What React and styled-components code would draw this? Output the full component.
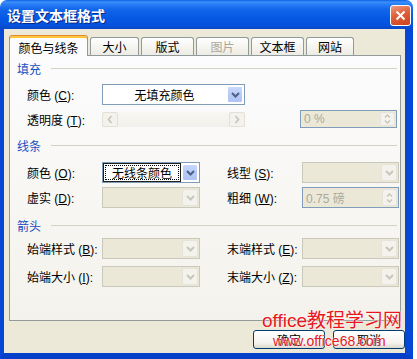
import React from 'react';
import styled, { createGlobalStyle } from 'styled-components';

const GlobalStyle = createGlobalStyle`
  html, body {
    margin: 0;
    padding: 0;
    background: #fff;
  }
  body {
    font-family: "Liberation Sans", "Noto Sans CJK SC", sans-serif;
    font-size: 12px;
    color: #000;
  }
`;

const Page = styled.div`
  position: relative;
  width: 417px;
  height: 359px;
  overflow: hidden;
  background: #fff;
`;

const Window = styled.div`
  width: 413px;
  height: 359px;
  display: flex;
  flex-direction: column;
`;

const TitleBar = styled.div`
  flex: none;
  height: 29px;
  display: flex;
  align-items: center;
  justify-content: space-between;
  padding: 0 2px 0 7px;
  border-radius: 7px 7px 0 0;
  background: linear-gradient(
    180deg,
    #0b5fe6 0%,
    #3d8ff9 7%,
    #2b7ff6 14%,
    #1266ea 32%,
    #0659e4 60%,
    #0553dd 85%,
    #0848c8 100%
  );
`;

const Title = styled.span`
  color: #fff;
  font-size: 14px;
  font-weight: bold;
  text-shadow: 1px 1px 0 #0a2a8a;
`;

const CloseButton = styled.div`
  width: 21px;
  height: 21px;
  box-sizing: border-box;
  border: 1px solid #fff;
  border-radius: 3px;
  background: linear-gradient(160deg, #ef9a7d 0%, #e0603a 45%, #c9421c 100%);
  display: flex;
  align-items: center;
  justify-content: center;
  margin-top: 1px;
`;

const Body = styled.div`
  flex: 1;
  display: flex;
  flex-direction: column;
  background: #ece9d8;
  border-left: 4px solid #0747d6;
  border-right: 8px solid #0747d6;
  border-bottom: 6px solid #0640c8;
  padding: 6px 0 0 5px;
`;

const Tabs = styled.div`
  display: flex;
  align-items: flex-end;
  gap: 2px;
  height: 20px;
`;

const Tab = styled.div`
  position: relative;
  box-sizing: border-box;
  width: ${p => p.$w}px;
  height: ${p => (p.$active ? 21 : 18)}px;
  margin-bottom: ${p => (p.$active ? -1 : 0)}px;
  z-index: ${p => (p.$active ? 2 : 0)};
  display: flex;
  align-items: center;
  justify-content: center;
  border: 1px solid #919b9c;
  border-bottom: none;
  border-top-color: ${p => (p.$active ? '#e68b2c' : '#919b9c')};
  border-radius: 3px 3px 0 0;
  box-shadow: ${p => (p.$active ? 'inset 0 2px 0 #ffc73c' : 'none')};
  background: ${p =>
    p.$active ? '#fcfcfe' : 'linear-gradient(180deg, #ffffff 0%, #f4f3ee 60%, #ecebe4 100%)'};
  color: ${p => (p.$disabled ? '#aca899' : '#000')};
  padding-top: ${p => (p.$active ? 2 : 0)}px;
`;

const Panel = styled.div`
  box-sizing: border-box;
  width: 392px;
  height: 266px;
  border: 1px solid #919b9c;
  background: linear-gradient(180deg, #fcfcfe 0%, #f7f6f2 60%, #f3f2ec 100%);
  padding: 5px 3px 0 7px;
  display: flex;
  flex-direction: column;
`;

const Header = styled.div`
  height: 14px;
  margin-top: ${p => p.$mt || 0}px;
  display: flex;
  align-items: center;
  color: #1a4fc0;
`;

const HeaderLine = styled.div`
  flex: 1;
  height: 1px;
  margin-left: 10px;
  background: #d5d2c4;
`;

const Row = styled.div`
  display: flex;
  align-items: center;
  height: ${p => p.$h}px;
  margin-top: ${p => p.$mt}px;
  padding-left: 10px;
`;

const Label = styled.div`
  flex: none;
  width: 75px;
  margin-left: ${p => p.$ml || 0}px;
  white-space: pre;
  u {
    text-decoration: underline;
  }
`;

const Combo = styled.div`
  flex: none;
  box-sizing: border-box;
  width: ${p => p.$w}px;
  height: 100%;
  display: flex;
  border: 1px solid ${p => (p.$disabled ? '#cac8bb' : '#7f9db9')};
  background: ${p => (p.$disabled ? '#ebe8d8' : '#fff')};
`;

const ComboText = styled.div`
  flex: 1;
  display: flex;
  align-items: center;
  justify-content: center;
  box-shadow: ${p => (p.$focused ? 'inset 0 0 0 1px #1e1e1e' : 'none')};
  outline: ${p => (p.$focused ? '1px dotted #000' : 'none')};
  outline-offset: -3px;
`;

const ComboButton = styled.div`
  flex: none;
  box-sizing: border-box;
  width: 16px;
  margin: 1px;
  display: flex;
  align-items: center;
  justify-content: center;
  border: 1px solid ${p => (p.$disabled ? '#e6e4da' : '#fff')};
  border-radius: 2px;
  background: ${p =>
    p.$disabled
      ? '#f3f2ec'
      : 'linear-gradient(180deg, #c9d8fb 0%, #b8cbf7 50%, #aec3f5 100%)'};
`;

const Scroll = styled.div`
  flex: none;
  box-sizing: border-box;
  width: ${p => p.$w}px;
  height: 15px;
  display: flex;
  justify-content: space-between;
  background: linear-gradient(180deg, #f8f7f2, #f1f0ea);
`;

const ScrollButton = styled.div`
  box-sizing: border-box;
  width: 16px;
  height: 15px;
  display: flex;
  align-items: center;
  justify-content: center;
  border: 1px solid #e3e1d6;
  border-radius: 2px;
  background: #f3f2ec;
`;

const Spin = styled.div`
  flex: none;
  box-sizing: border-box;
  width: ${p => p.$w}px;
  height: 100%;
  margin-left: ${p => p.$ml || 0}px;
  display: flex;
  border: 1px solid #7f9db9;
  background: #ebe8d8;
`;

const SpinText = styled.div`
  flex: 1;
  display: flex;
  align-items: center;
  padding-left: 3px;
  color: #aca899;
  white-space: pre;
`;

const SpinArrows = styled.div`
  flex: none;
  width: 15px;
  margin: 1px;
  box-sizing: border-box;
  border: 1px solid #e6e4da;
  border-radius: 2px;
  background: #f3f2ec;
  display: flex;
  flex-direction: column;
  align-items: center;
  justify-content: center;
  gap: 2px;
`;

const Buttons = styled.div`
  display: flex;
  justify-content: flex-end;
  gap: 8px;
  margin-top: 9px;
`;

const Button = styled.div`
  box-sizing: border-box;
  width: 72px;
  height: 19px;
  display: flex;
  align-items: center;
  justify-content: center;
  border: 1px solid #003c74;
  border-radius: 3px;
  background: linear-gradient(180deg, #ffffff 0%, #f4f3ee 70%, #dcd8cc 100%);
`;

const Watermark = styled.div`
  position: absolute;
  left: ${p => p.$x}px;
  top: ${p => p.$y}px;
  color: #e8171f;
  font-size: ${p => p.$size}px;
  line-height: 1;
  white-space: nowrap;
  text-shadow: 0 0 2px #fff, 0 0 1px #fff;
  pointer-events: none;
`;

const ChevronDown = ({ color }) => (
  <svg width="9" height="6" viewBox="0 0 9 6">
    <path d="M1 1 L4.5 4.5 L8 1" stroke={color} strokeWidth="2" fill="none" />
  </svg>
);

const ChevronSide = ({ dir }) => (
  <svg width="6" height="9" viewBox="0 0 6 9">
    <path
      d={dir === 'left' ? 'M4.5 1 L1.5 4.5 L4.5 8' : 'M1.5 1 L4.5 4.5 L1.5 8'}
      stroke="#c6c4b8"
      strokeWidth="1.6"
      fill="none"
    />
  </svg>
);

const SpinGlyphs = () => (
  <SpinArrows>
    <svg width="7" height="4" viewBox="0 0 7 4">
      <path d="M1 3.5 L3.5 1 L6 3.5" stroke="#c6c4b8" strokeWidth="1.3" fill="none" />
    </svg>
    <svg width="7" height="4" viewBox="0 0 7 4">
      <path d="M1 0.5 L3.5 3 L6 0.5" stroke="#c6c4b8" strokeWidth="1.3" fill="none" />
    </svg>
  </SpinArrows>
);

const Dropdown = ({ w, text, disabled, focused }) => (
  <Combo $w={w} $disabled={disabled}>
    <ComboText $focused={focused}>{text}</ComboText>
    <ComboButton $disabled={disabled}>
      <ChevronDown color={disabled ? '#c9c7ba' : '#4d6185'} />
    </ComboButton>
  </Combo>
);

const tabs = [
  { label: '颜色与线条', w: 79, active: true },
  { label: '大小', w: 49 },
  { label: '版式', w: 53 },
  { label: '图片', w: 53, disabled: true },
  { label: '文本框', w: 53 },
  { label: '网站', w: 48 },
];

export default function App() {
  return (
    <Page>
      <GlobalStyle />
      <Window>
        <TitleBar>
          <Title>设置文本框格式</Title>
          <CloseButton>
            <svg width="11" height="11" viewBox="0 0 11 11">
              <path d="M1.5 1.5 L9.5 9.5 M9.5 1.5 L1.5 9.5" stroke="#fff" strokeWidth="2" />
            </svg>
          </CloseButton>
        </TitleBar>
        <Body>
          <Tabs>
            {tabs.map(t => (
              <Tab key={t.label} $w={t.w} $active={t.active} $disabled={t.disabled}>
                {t.label}
              </Tab>
            ))}
          </Tabs>
          <Panel>
            <Header>
              填充
              <HeaderLine />
            </Header>
            <Row $h={21} $mt={9}>
              <Label>颜色 (<u>C</u>):</Label>
              <Dropdown w={143} text="无填充颜色" />
            </Row>
            <Row $h={18} $mt={5}>
              <Label>透明度 (<u>T</u>):</Label>
              <Scroll $w={143}>
                <ScrollButton>
                  <ChevronSide dir="left" />
                </ScrollButton>
                <ScrollButton>
                  <ChevronSide dir="right" />
                </ScrollButton>
              </Scroll>
              <Spin $w={97} $ml={55}>
                <SpinText>0 %</SpinText>
                <SpinGlyphs />
              </Spin>
            </Row>

            <Header $mt={10}>
              线条
              <HeaderLine />
            </Header>
            <Row $h={21} $mt={10}>
              <Label>颜色 (<u>O</u>):</Label>
              <Dropdown w={98} text="无线条颜色" focused />
              <Label $ml={27}>线型 (<u>S</u>):</Label>
              <Dropdown w={97} disabled />
            </Row>
            <Row $h={21} $mt={4}>
              <Label>虚实 (<u>D</u>):</Label>
              <Dropdown w={98} disabled />
              <Label $ml={27}>粗细 (<u>W</u>):</Label>
              <Spin $w={97}>
                <SpinText>0.75 磅</SpinText>
                <SpinGlyphs />
              </Spin>
            </Row>

            <Header $mt={10}>
              箭头
              <HeaderLine />
            </Header>
            <Row $h={21} $mt={6}>
              <Label>始端样式 (<u>B</u>):</Label>
              <Dropdown w={98} disabled />
              <Label $ml={27}>末端样式 (<u>E</u>):</Label>
              <Dropdown w={97} disabled />
            </Row>
            <Row $h={21} $mt={7}>
              <Label>始端大小 (<u>I</u>):</Label>
              <Dropdown w={98} disabled />
              <Label $ml={27}>末端大小 (<u>Z</u>):</Label>
              <Dropdown w={97} disabled />
            </Row>
          </Panel>
          <Buttons>
            <Button>确定</Button>
            <Button>取消</Button>
          </Buttons>
        </Body>
      </Window>
      <Watermark $x={262} $y={311} $size={19}>office教程学习网</Watermark>
      <Watermark $x={273} $y={334} $size={14}>www.office68.com</Watermark>
    </Page>
  );
}
